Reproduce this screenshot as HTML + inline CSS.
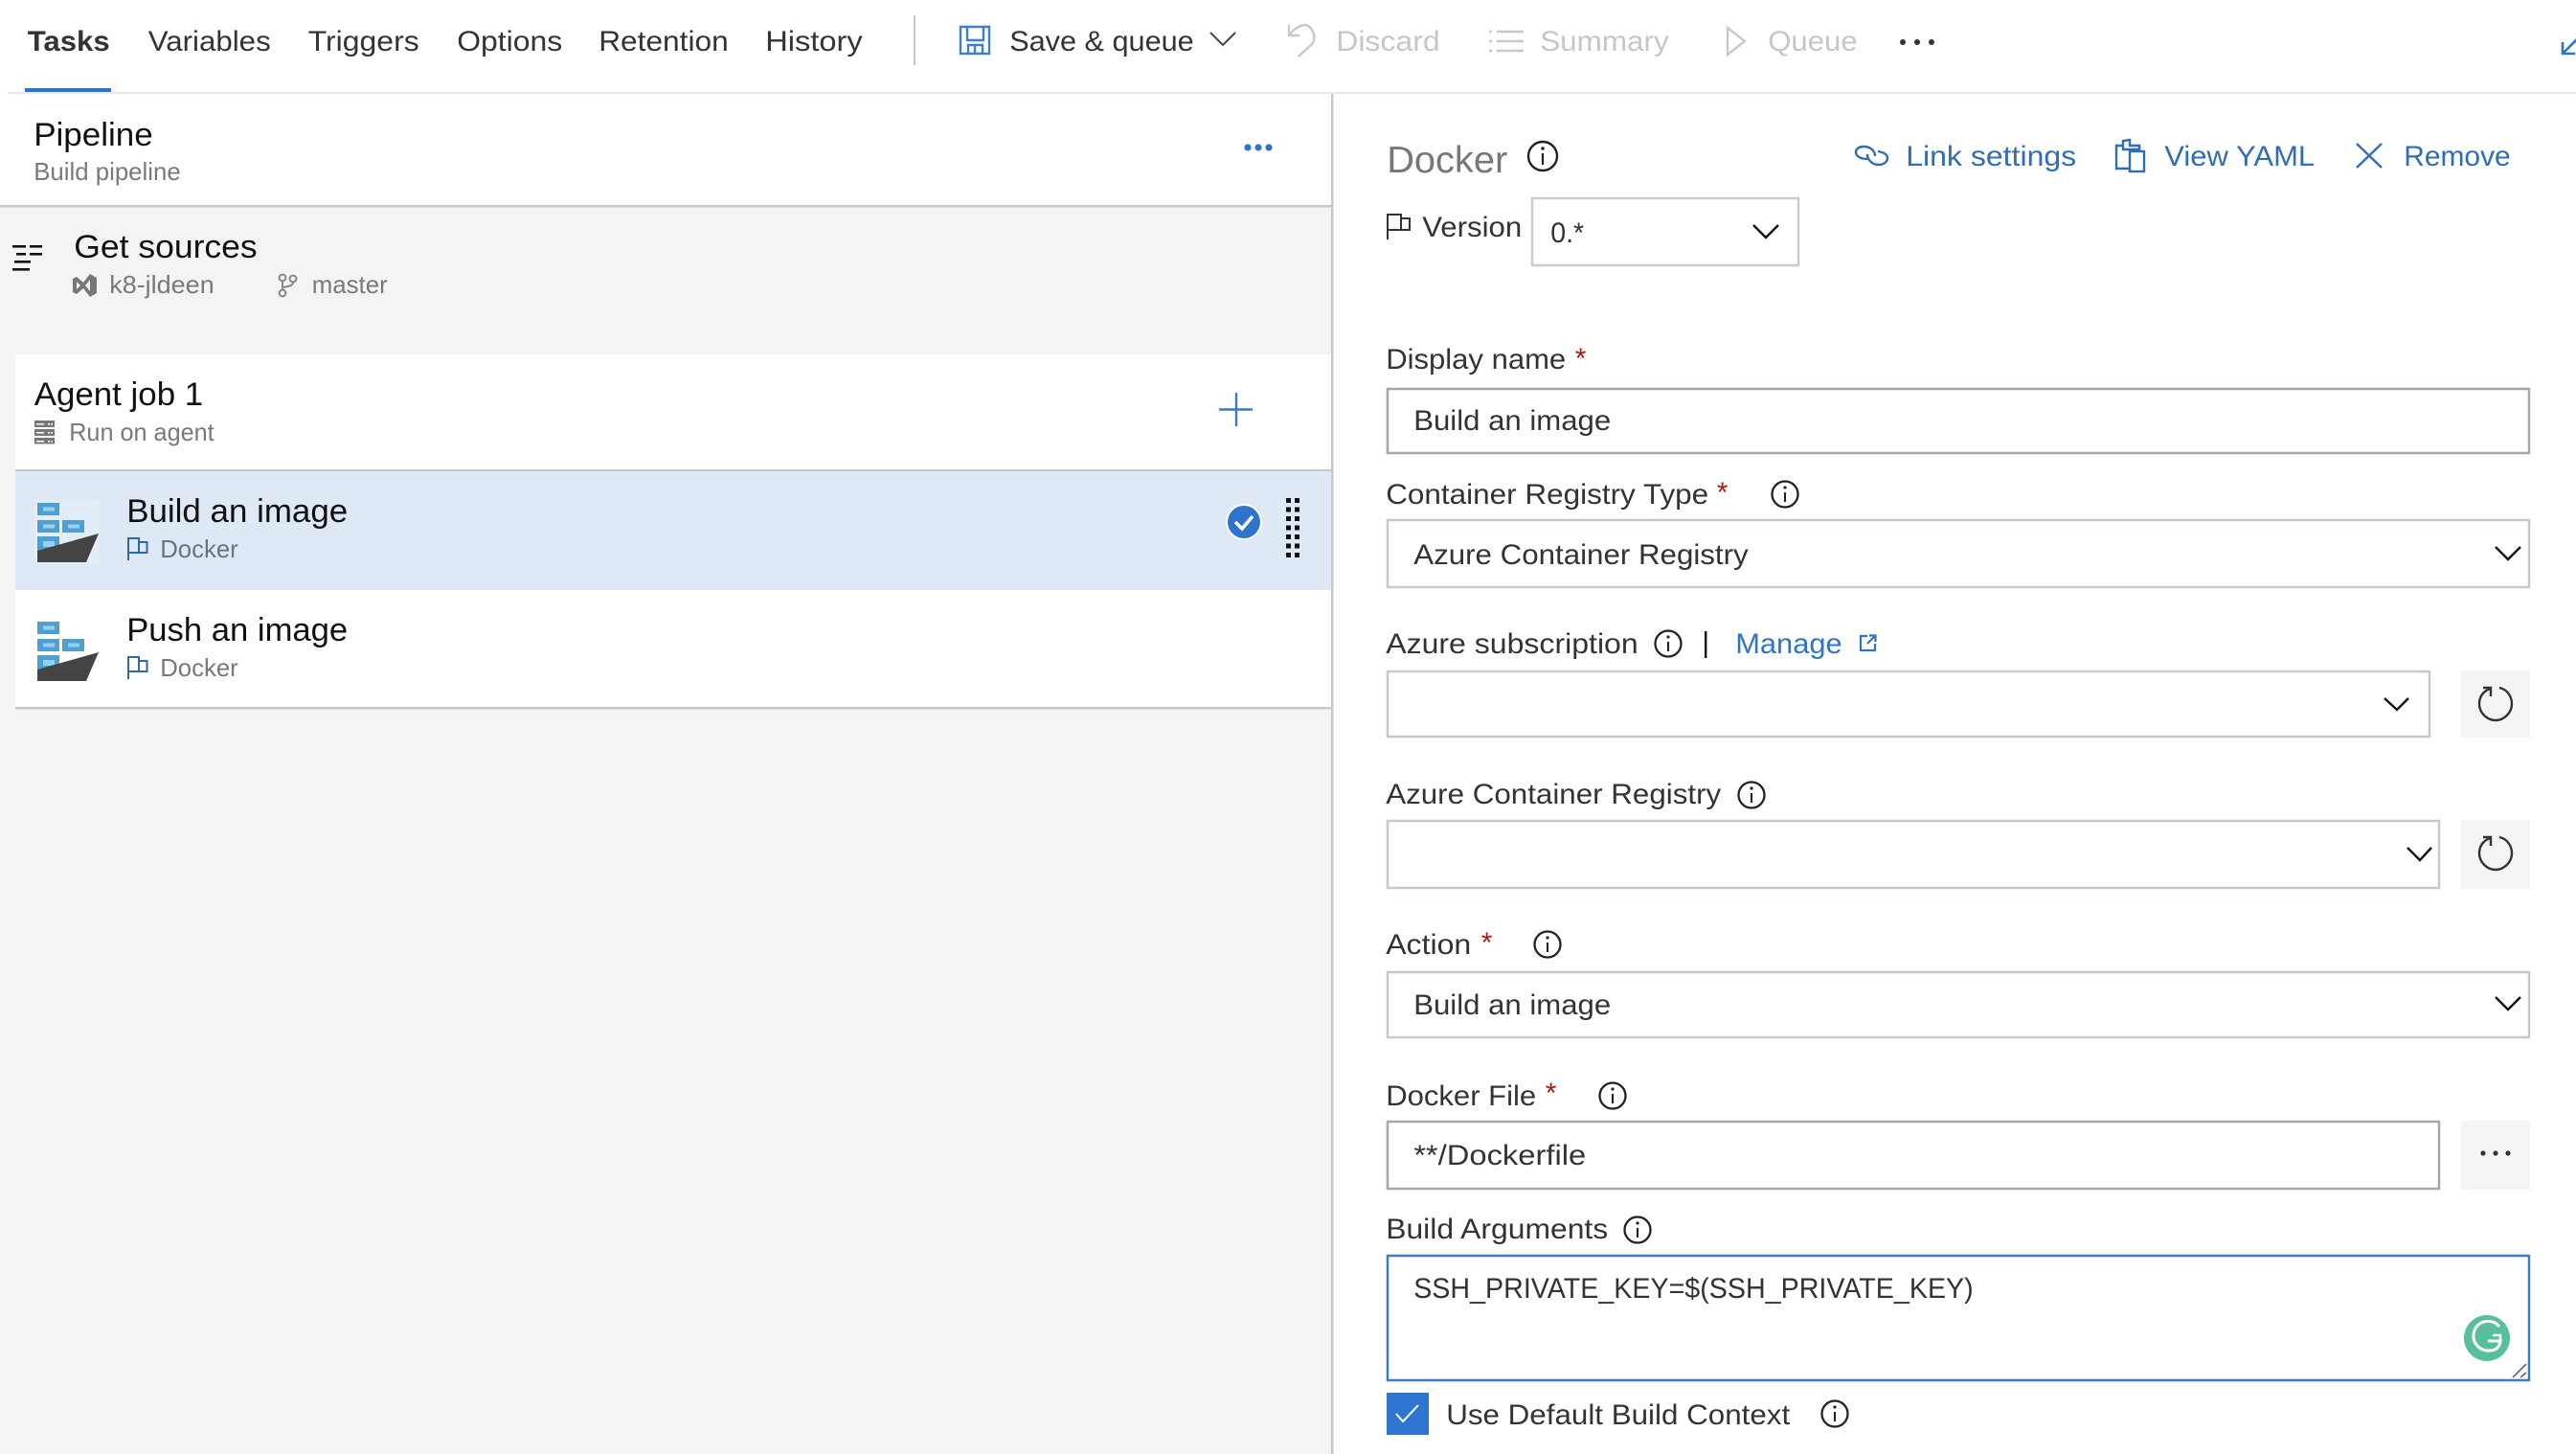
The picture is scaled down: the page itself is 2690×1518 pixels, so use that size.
<!DOCTYPE html>
<html lang="en">
<head>
<meta charset="utf-8">
<title>Pipeline - Tasks</title>
<style>
html,body{margin:0;padding:0;background:#fff;width:2690px;height:1518px;overflow:hidden}
svg{display:block}
text{font-family:"Liberation Sans",sans-serif;fill:#333;font-size:30px;transform:translateX(.7px)}
.g{fill:#c6c6c6}
.sub{font-size:26px;fill:#797979}
.h{font-size:34.5px;fill:#111}
.b{fill:#2f6db5}
.star{fill:#a81a10;font-size:30px}
.ic{fill:none;stroke:#222;stroke-width:2.4}
</style>
</head>
<body>
<svg xmlns="http://www.w3.org/2000/svg" width="2690" height="1518" viewBox="0 0 2690 1518">
<rect width="2690" height="1518" fill="#fff"/>

<!-- left panel backgrounds -->
<rect x="0" y="216" width="1390" height="1302" fill="#f4f4f4"/>
<rect x="0" y="214" width="1390" height="2.5" fill="#c8c8c8"/>
<rect x="16" y="370" width="1374" height="120" fill="#fff"/>
<rect x="16" y="490" width="1374" height="2.5" fill="#c8c8c8"/>
<rect x="16" y="492" width="1374" height="124" fill="#dee9f5"/>
<rect x="16" y="616" width="1374" height="122" fill="#fff"/>
<rect x="16" y="738" width="1374" height="2.5" fill="#c8c8c8"/>
<rect x="1390" y="98" width="2.5" height="1420" fill="#c8c8c8"/>

<!-- toolbar -->
<rect x="8" y="96" width="2682" height="2" fill="#e8e8e8"/>
<rect x="26" y="92" width="90" height="4" fill="#2f74c8"/>
<text x="28" y="53" font-weight="700" textLength="86" lengthAdjust="spacingAndGlyphs">Tasks</text>
<text x="154" y="53" textLength="128" lengthAdjust="spacingAndGlyphs">Variables</text>
<text x="321" y="53" textLength="116" lengthAdjust="spacingAndGlyphs">Triggers</text>
<text x="476.500" y="53" textLength="110" lengthAdjust="spacingAndGlyphs">Options</text>
<text x="624.500" y="53" textLength="135.500" lengthAdjust="spacingAndGlyphs">Retention</text>
<text x="798.500" y="53" textLength="101.500" lengthAdjust="spacingAndGlyphs">History</text>
<rect x="954" y="16" width="2" height="52" fill="#c8c8c8"/>

<g fill="none" stroke="#3f7fc4" stroke-width="2.4">
<path d="M1003 28H1033V56H1003Z"/>
<path d="M1010 28V42H1027V28"/>
<path d="M1011 56V47H1026V56M1018 47V56"/>
</g>
<text x="1053.500" y="53" textLength="192.500" lengthAdjust="spacingAndGlyphs">Save &amp; queue</text>
<path d="M1264 34L1277 47L1290 34" fill="none" stroke="#444" stroke-width="2"/>

<g fill="none" stroke="#c8c8c8" stroke-width="2.4">
<path d="M1346 26V37H1357"/>
<path d="M1347 36C1351 30 1358 26 1364 26C1372 30 1374 38 1371 45L1356 59"/>
<path d="M1555 33h3M1555 43h3M1555 53h3M1563 33h28M1563 43h28M1563 53h28"/>
<path d="M1804 29L1822 43L1804 57Z"/>
</g>
<text class="g" x="1394.500" y="53" textLength="108.500" lengthAdjust="spacingAndGlyphs">Discard</text>
<text class="g" x="1607.500" y="53" textLength="134.500" lengthAdjust="spacingAndGlyphs">Summary</text>
<text class="g" x="1845.500" y="53" textLength="93.500" lengthAdjust="spacingAndGlyphs">Queue</text>
<circle cx="1987" cy="44" r="3" fill="#333"/><circle cx="2002" cy="44" r="3" fill="#333"/><circle cx="2017" cy="44" r="3" fill="#333"/>
<path d="M2676 44V56H2689M2676 56L2692 40" fill="none" stroke="#2f74c8" stroke-width="2.6"/>

<!-- pipeline header -->
<text x="34.500" y="152" style="font-size:34px;fill:#111" textLength="124.500" lengthAdjust="spacingAndGlyphs">Pipeline</text>
<text class="sub" x="34.500" y="188" textLength="153.500" lengthAdjust="spacingAndGlyphs">Build pipeline</text>
<circle cx="1303" cy="154" r="3.6" fill="#2f74c8"/><circle cx="1314" cy="154" r="3.6" fill="#2f74c8"/><circle cx="1325" cy="154" r="3.6" fill="#2f74c8"/>

<!-- get sources -->
<g fill="#111">
<rect x="13" y="256" width="14" height="2.6"/><rect x="31" y="256" width="13" height="2.6"/>
<rect x="17" y="264" width="10" height="2.6"/><rect x="31" y="264" width="13" height="2.6"/>
<rect x="15" y="272" width="17" height="2.6"/>
<rect x="13" y="280" width="18" height="2.6"/>
</g>
<text class="h" x="76.500" y="269" textLength="191.500" lengthAdjust="spacingAndGlyphs">Get sources</text>
<path d="M76 291L80 289L87 295L94 286L101 290V306L94 310L87 301L80 307L76 305ZM80 294V302L84 298ZM94 292L89 298L94 304Z" fill="#777" fill-rule="evenodd"/>
<text class="sub" x="113.500" y="306" textLength="109.500" lengthAdjust="spacingAndGlyphs">k8-jldeen</text>
<g fill="none" stroke="#888" stroke-width="2">
<circle cx="295" cy="290" r="3.4"/><circle cx="295" cy="306" r="3.4"/><circle cx="306" cy="291" r="3.4"/>
<path d="M295 293.500V302.500M295 300C303 299 306 298 306 294.500"/>
</g>
<text class="sub" x="325" y="306" textLength="79" lengthAdjust="spacingAndGlyphs">master</text>

<!-- agent job -->
<text class="h" x="35" y="423" textLength="176.500" lengthAdjust="spacingAndGlyphs">Agent job 1</text>
<g fill="#777">
<rect x="36" y="439" width="21" height="7"/><rect x="36" y="448" width="21" height="7"/><rect x="36" y="457" width="21" height="6.500"/>
</g>
<g fill="#fff"><rect x="38" y="442" width="8" height="1.5"/><rect x="38" y="451" width="8" height="1.5"/><rect x="38" y="460" width="8" height="1.5"/><rect x="50" y="442" width="2" height="1.500"/><rect x="53" y="442" width="2" height="1.500"/><rect x="50" y="451" width="2" height="1.500"/><rect x="53" y="451" width="2" height="1.500"/><rect x="50" y="460" width="2" height="1.500"/><rect x="53" y="460" width="2" height="1.500"/></g>
<text class="sub" x="71.500" y="460" textLength="151.500" lengthAdjust="spacingAndGlyphs">Run on agent</text>
<path d="M1291 410V445M1273 427.500H1308" fill="none" stroke="#3a78c3" stroke-width="2.4"/>

<!-- build row -->
<rect x="36" y="522" width="68" height="67" rx="4" fill="#e3edf8"/>
<g>
<g fill="#4d9fd4">
<rect x="39" y="525" width="23" height="13"/><rect x="39" y="543" width="23" height="13"/><rect x="65" y="543" width="23" height="13"/><rect x="39" y="560" width="23" height="16"/>
</g>
<g fill="#96d0ea">
<rect x="45" y="529.500" width="12" height="4"/><rect x="45" y="547.500" width="12" height="4"/><rect x="71" y="547.500" width="12" height="4"/><rect x="45" y="565" width="12" height="6"/>
</g>
<path d="M39 575L103 557L90 587H39Z" fill="#444"/>
</g>
<text class="h" x="131.500" y="545" textLength="231" lengthAdjust="spacingAndGlyphs">Build an image</text>
<g fill="none" stroke="#2e6aa8" stroke-width="2"><path d="M134 585V562H145V577H134M145 566H153.500V577H145"/></g>
<text class="sub" style="fill:#667485" x="166.500" y="582" textLength="81.500" lengthAdjust="spacingAndGlyphs">Docker</text>
<circle cx="1299" cy="545" r="19" fill="#fff"/>
<circle cx="1299" cy="545" r="17" fill="#2f74cc"/>
<path d="M1290 545L1297 552L1308 539" fill="none" stroke="#fff" stroke-width="3.600"/>
<g fill="#111">
<rect x="1343" y="520" width="5" height="5"/><rect x="1352" y="520" width="5" height="5"/>
<rect x="1343" y="529.500" width="5" height="5"/><rect x="1352" y="529.500" width="5" height="5"/>
<rect x="1343" y="539" width="5" height="5"/><rect x="1352" y="539" width="5" height="5"/>
<rect x="1343" y="548.500" width="5" height="5"/><rect x="1352" y="548.500" width="5" height="5"/>
<rect x="1343" y="558" width="5" height="5"/><rect x="1352" y="558" width="5" height="5"/>
<rect x="1343" y="567.500" width="5" height="5"/><rect x="1352" y="567.500" width="5" height="5"/>
<rect x="1343" y="577" width="5" height="5"/><rect x="1352" y="577" width="5" height="5"/>
</g>

<!-- push row -->
<g transform="translate(0,124)">
<g fill="#4d9fd4">
<rect x="39" y="525" width="23" height="13"/><rect x="39" y="543" width="23" height="13"/><rect x="65" y="543" width="23" height="13"/><rect x="39" y="560" width="23" height="16"/>
</g>
<g fill="#96d0ea">
<rect x="45" y="529.500" width="12" height="4"/><rect x="45" y="547.500" width="12" height="4"/><rect x="71" y="547.500" width="12" height="4"/><rect x="45" y="565" width="12" height="6"/>
</g>
<path d="M39 575L103 557L90 587H39Z" fill="#444"/>
<g fill="none" stroke="#2e6aa8" stroke-width="2"><path d="M134 585V562H145V577H134M145 566H153.500V577H145"/></g>
</g>
<text class="h" x="131.500" y="669" textLength="231" lengthAdjust="spacingAndGlyphs">Push an image</text>
<text class="sub" x="166.500" y="706" textLength="81.500" lengthAdjust="spacingAndGlyphs">Docker</text>

<!-- right header -->
<text x="1447.500" y="180" style="font-size:39px;fill:#777" textLength="126" lengthAdjust="spacingAndGlyphs">Docker</text>
<g class="ic"><circle cx="1611" cy="163" r="15" stroke="#222" fill="none" stroke-width="2.4"/><path d="M1611 160V172" stroke="#222" stroke-width="2.2"/><circle cx="1611" cy="155" r="1.800" fill="#222" stroke="none"/></g>

<g fill="none" stroke="#2f6db5" stroke-width="2.400">
<path d="M1950 166C1943 166 1938 163 1938 159C1938 155 1942 153 1946 153C1953 153 1958 157 1958 163"/>
<path d="M1950 161C1950 167 1955 172 1962 172C1968 172 1971 168 1971 165C1971 161 1967 159 1961 158"/>
</g>
<text class="b" x="1989.500" y="173" textLength="178" lengthAdjust="spacingAndGlyphs">Link settings</text>
<g fill="none" stroke="#2f6db5" stroke-width="2.400">
<path d="M2225 176H2210V152H2217V147L2224 146V152H2234V158"/>
<path d="M2217 152V156H2234V152"/>
<rect x="2224" y="158" width="15" height="21"/>
</g>
<text class="b" x="2259.500" y="173" textLength="157" lengthAdjust="spacingAndGlyphs">View YAML</text>
<path d="M2461 150L2487 175M2487 150L2461 175" fill="none" stroke="#2f6db5" stroke-width="2.400"/>
<text class="b" x="2509.500" y="173" textLength="111.500" lengthAdjust="spacingAndGlyphs">Remove</text>

<!-- version -->
<path d="M1449 250V224H1463V240H1449M1463 228H1472V240H1463" fill="none" stroke="#333" stroke-width="2"/>
<text x="1484.500" y="247" textLength="104" lengthAdjust="spacingAndGlyphs">Version</text>
<rect x="1600" y="207" width="278" height="70" fill="#fff" stroke="#ccc" stroke-width="2.500"/>
<text x="1618.500" y="253" textLength="35" lengthAdjust="spacingAndGlyphs">0.*</text>
<path d="M1831 235L1844 248L1857 235" fill="none" stroke="#111" stroke-width="2.400"/>

<!-- display name -->
<text x="1446.500" y="385" textLength="188" lengthAdjust="spacingAndGlyphs">Display name</text>
<text class="star" x="1644" y="384">*</text>
<rect x="1449" y="406" width="1192" height="67" fill="#fff" stroke="#a6a6a6" stroke-width="2.500"/>
<text x="1475.500" y="449" textLength="206" lengthAdjust="spacingAndGlyphs">Build an image</text>

<!-- registry type -->
<text x="1446.500" y="526" textLength="337" lengthAdjust="spacingAndGlyphs">Container Registry Type</text>
<text class="star" x="1792" y="524">*</text>
<g><circle cx="1864" cy="516" r="13.500" fill="none" stroke="#222" stroke-width="2.300"/><path d="M1864 514V524" stroke="#222" stroke-width="2.100"/><circle cx="1864" cy="509" r="1.600" fill="#222"/></g>
<rect x="1449" y="543" width="1192" height="70" fill="#fff" stroke="#c8c8c8" stroke-width="2.500"/>
<text x="1475.500" y="589" textLength="349.500" lengthAdjust="spacingAndGlyphs">Azure Container Registry</text>
<path d="M2606 571L2619 584L2632 571" fill="none" stroke="#111" stroke-width="2.400"/>

<!-- subscription -->
<text x="1446.500" y="682" textLength="263.500" lengthAdjust="spacingAndGlyphs">Azure subscription</text>
<g><circle cx="1742" cy="672" r="13.500" fill="none" stroke="#222" stroke-width="2.300"/><path d="M1742 670V680" stroke="#222" stroke-width="2.100"/><circle cx="1742" cy="665" r="1.600" fill="#222"/></g>
<rect x="1780" y="659" width="2.400" height="28" fill="#111"/>
<text x="1811.500" y="682" style="fill:#2f74c8" textLength="111.500" lengthAdjust="spacingAndGlyphs">Manage</text>
<path d="M1950 664H1943V679H1958V672M1950 672L1958 664M1952 663.500H1958.500V670" fill="none" stroke="#2f74c8" stroke-width="2.200"/>
<rect x="1449" y="701" width="1088" height="68" fill="#fff" stroke="#c8c8c8" stroke-width="2.500"/>
<path d="M2490 729L2503 741L2515 729" fill="none" stroke="#111" stroke-width="2.400"/>
<rect x="2570" y="700" width="72" height="70" fill="#f4f4f4"/>
<path d="M2610 718C2619 720 2623 728 2623 735C2623 744 2615 752 2606 752C2597 752 2589 744 2589 735C2589 727 2593 722 2600 719" fill="none" stroke="#333" stroke-width="2.400"/>
<path d="M2593 718H2601V727" fill="none" stroke="#333" stroke-width="2.400"/>

<!-- acr -->
<text x="1446.500" y="839" textLength="350" lengthAdjust="spacingAndGlyphs">Azure Container Registry</text>
<g><circle cx="1829" cy="830" r="13.500" fill="none" stroke="#222" stroke-width="2.300"/><path d="M1829 828V838" stroke="#222" stroke-width="2.100"/><circle cx="1829" cy="823" r="1.600" fill="#222"/></g>
<rect x="1449" y="857" width="1098" height="70" fill="#fff" stroke="#c8c8c8" stroke-width="2.500"/>
<path d="M2514 885L2527 898L2539 885" fill="none" stroke="#111" stroke-width="2.400"/>
<rect x="2570" y="856" width="72" height="72" fill="#f4f4f4"/>
<path d="M2610 874C2619 876 2623 884 2623 891C2623 900 2615 908 2606 908C2597 908 2589 900 2589 891C2589 883 2593 878 2600 875" fill="none" stroke="#333" stroke-width="2.400"/>
<path d="M2593 874H2601V883" fill="none" stroke="#333" stroke-width="2.400"/>

<!-- action -->
<text x="1446.500" y="996" textLength="89" lengthAdjust="spacingAndGlyphs">Action</text>
<text class="star" x="1546" y="994">*</text>
<g><circle cx="1616" cy="986" r="13.500" fill="none" stroke="#222" stroke-width="2.300"/><path d="M1616 984V994" stroke="#222" stroke-width="2.100"/><circle cx="1616" cy="979" r="1.600" fill="#222"/></g>
<rect x="1449" y="1015" width="1192" height="68" fill="#fff" stroke="#c8c8c8" stroke-width="2.500"/>
<text x="1475.500" y="1059" textLength="206" lengthAdjust="spacingAndGlyphs">Build an image</text>
<path d="M2606 1041L2619 1054L2632 1041" fill="none" stroke="#111" stroke-width="2.400"/>

<!-- docker file -->
<text x="1446.500" y="1154" textLength="157" lengthAdjust="spacingAndGlyphs">Docker File</text>
<text class="star" x="1613" y="1151">*</text>
<g><circle cx="1684" cy="1144" r="13.500" fill="none" stroke="#222" stroke-width="2.300"/><path d="M1684 1142V1152" stroke="#222" stroke-width="2.100"/><circle cx="1684" cy="1137" r="1.600" fill="#222"/></g>
<rect x="1449" y="1171" width="1098" height="70" fill="#fff" stroke="#a6a6a6" stroke-width="2.500"/>
<text x="1475.500" y="1216" textLength="180" lengthAdjust="spacingAndGlyphs">**/Dockerfile</text>
<rect x="2570" y="1170" width="72" height="72" fill="#f4f4f4"/>
<circle cx="2593" cy="1204" r="2.600" fill="#333"/><circle cx="2606" cy="1204" r="2.600" fill="#333"/><circle cx="2619" cy="1204" r="2.600" fill="#333"/>

<!-- build arguments -->
<text x="1446.500" y="1293" textLength="232" lengthAdjust="spacingAndGlyphs">Build Arguments</text>
<g><circle cx="1710" cy="1284" r="13.500" fill="none" stroke="#222" stroke-width="2.300"/><path d="M1710 1282V1292" stroke="#222" stroke-width="2.100"/><circle cx="1710" cy="1277" r="1.600" fill="#222"/></g>
<rect x="1449" y="1311" width="1192" height="130" fill="#fff" stroke="#3d7abf" stroke-width="2.500"/>
<text x="1475.500" y="1355" textLength="584.500" lengthAdjust="spacingAndGlyphs">SSH_PRIVATE_KEY=$(SSH_PRIVATE_KEY)</text>
<circle cx="2597" cy="1397" r="24" fill="#58bf9b"/>
<path d="M2610 1385C2603 1376 2588 1378 2584 1389C2580 1401 2589 1411 2600 1410C2606 1410 2610 1407 2611 1400H2598" fill="none" stroke="#fff" stroke-width="3"/>
<path d="M2603 1394H2611V1402" fill="none" stroke="#fff" stroke-width="2.400"/>
<path d="M2624 1438L2638 1424M2632 1438L2638 1433" stroke="#666" stroke-width="1.600" fill="none"/>

<!-- checkbox -->
<rect x="1448" y="1454" width="44" height="44" fill="#2f74d0"/>
<path d="M1458 1476L1465 1484L1481 1467" fill="none" stroke="#fff" stroke-width="2"/>
<text x="1509.500" y="1487" textLength="359" lengthAdjust="spacingAndGlyphs">Use Default Build Context</text>
<g><circle cx="1916" cy="1476" r="13.500" fill="none" stroke="#222" stroke-width="2.300"/><path d="M1916 1474V1484" stroke="#222" stroke-width="2.100"/><circle cx="1916" cy="1469" r="1.600" fill="#222"/></g>
</svg>
</body>
</html>
